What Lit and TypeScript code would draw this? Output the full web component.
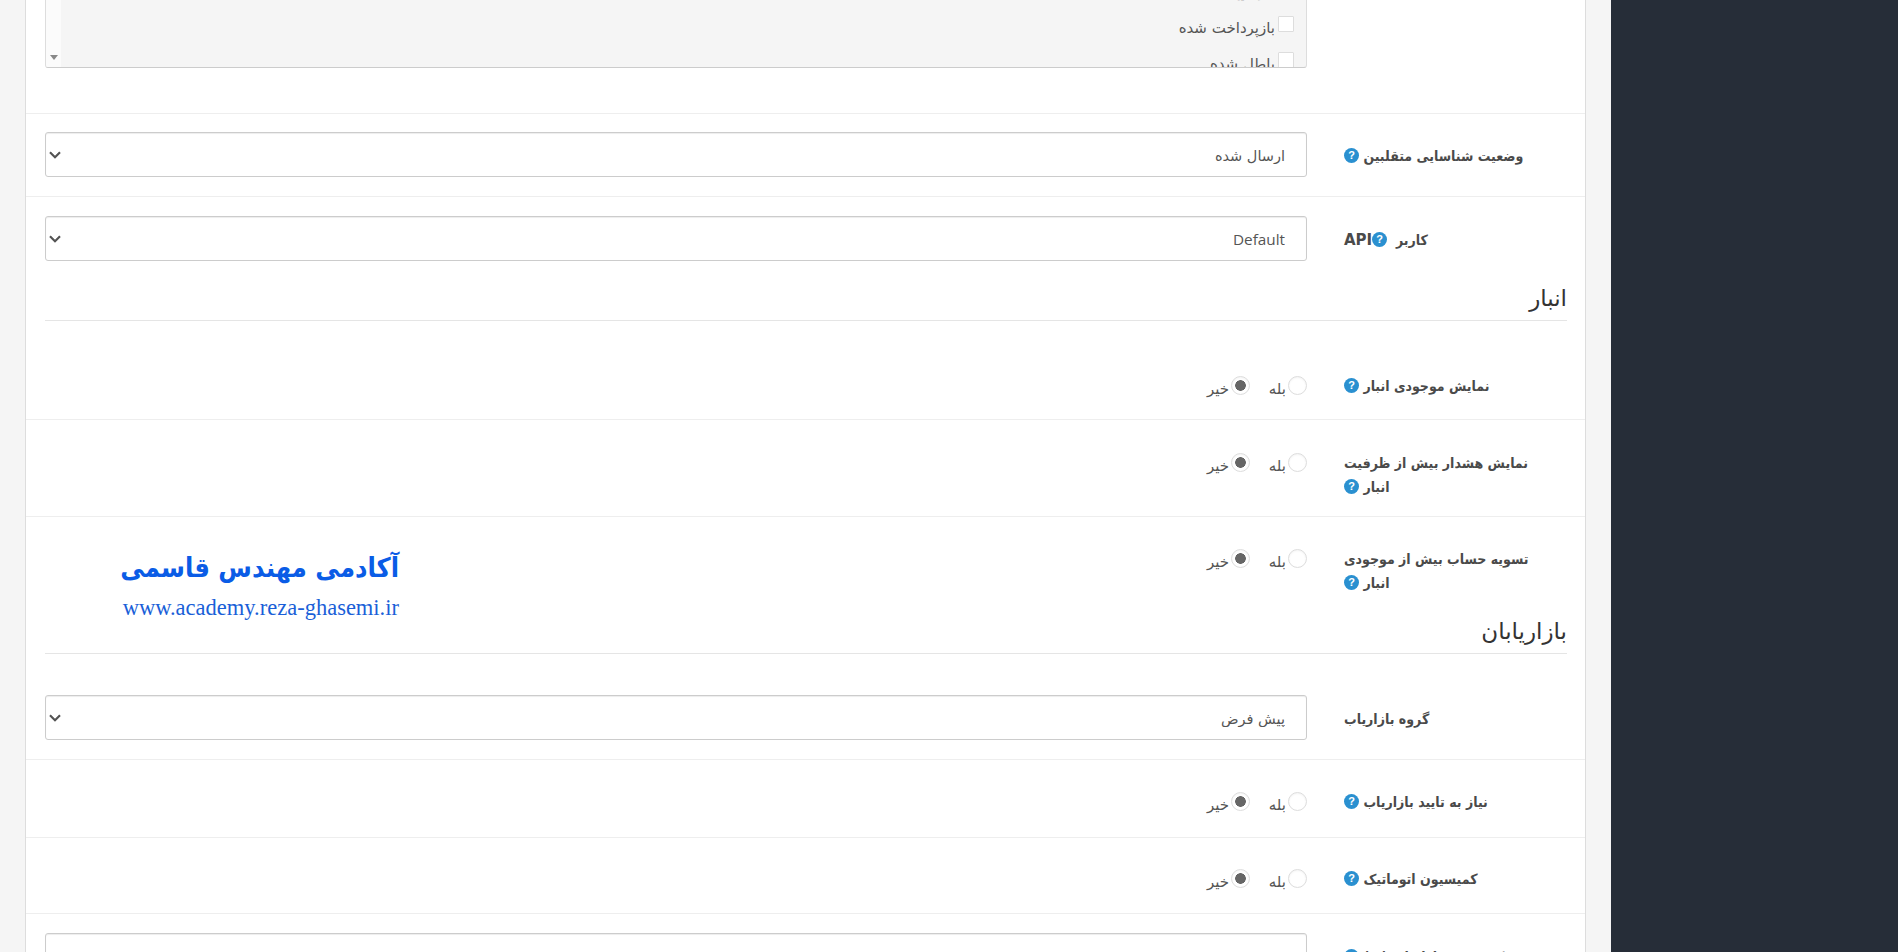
import { LitElement, html, css, nothing } from "lit";
import { customElement } from "lit/decorators.js";

type Field = {
  kind: "field";
  label: unknown;
  help: boolean;
  top: number;
  bottom: number;
  control: "radio" | "select" | "input";
  value?: string;
};
type Row = { kind: "head"; title: string } | Field;

const ROWS: Row[] = [
  { kind: "field", label: "وضعیت شناسایی متقلبین", help: true, top: 18, bottom: 19, control: "select", value: "ارسال شده" },
  { kind: "field", label: "API", help: true, top: 19, bottom: 18, control: "select", value: "Default" },
  { kind: "head", title: "انبار" },
  { kind: "field", label: "نمایش موجودی انبار", help: true, top: 53, bottom: 21, control: "radio" },
  { kind: "field", label: html`نمایش هشدار بیش از ظرفیت<br />انبار`, help: true, top: 31, bottom: 17, control: "radio" },
  { kind: "field", label: html`تسویه حساب بیش از موجودی<br />انبار`, help: true, top: 30, bottom: 17, control: "radio" },
  { kind: "head", title: "بازاریابان" },
  { kind: "field", label: "گروه بازاریاب", help: false, top: 41, bottom: 19, control: "select", value: "پیش فرض" },
  { kind: "field", label: "نیاز به تایید بازاریاب", help: true, top: 30, bottom: 23, control: "radio" },
  { kind: "field", label: "کمیسیون اتوماتیک", help: true, top: 29, bottom: 22, control: "radio" },
  { kind: "field", label: "کمیسیون بازاریاب (%)", help: true, top: 19, bottom: 19, control: "input", value: "5" },
];

@customElement("app-root")
export class AppRoot extends LitElement {
  static styles = css`
    :host {
      display: flex;
      height: 952px;
      overflow: hidden;
      background: #f5f5f5;
      font-family: "DejaVu Sans", "Noto Sans", sans-serif;
      color: #555;
      font-size: 13px;
    }
    .gutter { flex: 1; display: flex; padding: 0 25px; min-width: 0; }
    .side { width: 287px; flex: none; background: #262d38; }
    .card {
      position: relative;
      flex: 1;
      background: #fff;
      border-left: 1px solid #ddd;
      border-right: 1px solid #ddd;
      direction: rtl;
      height: 952px;
      overflow: hidden;
    }
    .row {
      display: grid;
      grid-template-columns: 223px 1262px;
      column-gap: 37px;
      padding-left: 19px;
      padding-right: 18px;
      border-bottom: 1px solid #eee;
    }
    .row.flat { border-bottom: 0; }
    .first { padding-top: 0; padding-bottom: 45px; }
    label.lab {
      display: block;
      text-align: left;
      font-family: "DejaVu Sans Condensed", "DejaVu Sans", sans-serif;
      font-weight: 700;
      font-size: 14px;
      line-height: 24px;
      color: #4a4a4a;
    }
    label.selectlab { margin-top: 12px; }
    .api { font-size: 15px; font-family: "DejaVu Sans", sans-serif; }
    .help {
      display: inline-block;
      width: 15px;
      height: 15px;
      border-radius: 50%;
      background: #2a90d0;
      color: #fff;
      font: 700 11px/15px "Liberation Sans", sans-serif;
      text-align: center;
      vertical-align: 2px;
    }
    .ctl {
      appearance: none;
      display: block;
      box-sizing: border-box;
      width: 100%;
      height: 45px;
      border: 1px solid #ccc;
      border-radius: 3px;
      background-color: #fff;
      box-shadow: inset 0 1px 1px rgba(0, 0, 0, 0.075);
      color: #555;
      padding: 3px 21px 0 12px;
      font: 14.5px "DejaVu Sans", sans-serif;
      direction: rtl;
      margin: 0;
    }
    select.ctl {
      background-image: url("data:image/svg+xml,%3Csvg xmlns='http://www.w3.org/2000/svg' width='12' height='8' viewBox='0 0 12 8'%3E%3Cpath d='M1 1.2 6 6.2 11 1.2' fill='none' stroke='%23555' stroke-width='2.2'/%3E%3C/svg%3E");
      background-repeat: no-repeat;
      background-position: left 3px center;
    }
    .ctl.en { font: 15.3px "Open Sans", sans-serif; padding-top: 0; }
    .radios {
      display: flex;
      height: 24px;
      padding-top: 2px;
      box-sizing: border-box;
      font-size: 15px;
      line-height: 26px;
    }
    .opt { display: flex; align-items: flex-start; gap: 2px; width: 57px; flex: none; }
    input[type="radio"] {
      appearance: none;
      flex: none;
      width: 19px;
      height: 19px;
      margin: 0;
      border: 1px solid #ddd;
      border-radius: 50%;
      background: #fff;
      box-shadow: inset 0 1px 2px rgba(0, 0, 0, 0.05);
    }
    input[type="radio"]:checked {
      background: radial-gradient(circle, #666 0 5px, #fff 5.6px);
    }
    .list {
      display: flex;
      height: 68px;
      box-sizing: border-box;
      border: 1px solid #ddd;
      border-top: 0;
      border-bottom-color: #ccc;
      border-radius: 0 0 3px 3px;
      background: #f5f5f5;
      overflow: hidden;
    }
    .items { flex: 1; margin-top: -20px; padding-right: 12px; }
    .item { display: flex; height: 36px; gap: 3px; font-size: 15px; line-height: 24px; }
    input[type="checkbox"] {
      appearance: none;
      flex: none;
      width: 16px;
      height: 16px;
      margin: 0;
      background: #fff;
      border: 1px solid #ddd;
      border-radius: 1px;
    }
    .bar {
      width: 15px;
      flex: none;
      background: #fbfbfb;
      display: flex;
      align-items: flex-end;
      justify-content: center;
      padding-bottom: 7px;
      box-sizing: border-box;
    }
    .bar i {
      width: 0;
      height: 0;
      border-left: 4.5px solid transparent;
      border-right: 4.5px solid transparent;
      border-top: 5px solid #888;
    }
    .head {
      margin: 0 18px 0 19px;
      height: 41px;
      border-bottom: 1px solid #e5e5e5;
      font-weight: 400;
      font-size: 23px;
      line-height: 38px;
      color: #333;
    }
    .mark {
      position: absolute;
      left: 95px;
      top: 545px;
      width: 278px;
      color: #0a5ce6;
      text-align: right;
    }
    .mark b {
      display: block;
      font: 600 27px/46px "DejaVu Sans Condensed", "DejaVu Sans", sans-serif;
      white-space: nowrap;
    }
    .mark u {
      display: block;
      direction: ltr;
      text-decoration: none;
      font: 22.5px/30px "Liberation Serif", serif;
      white-space: nowrap;
      color: #1a5fd8;
      margin-top: 2px;
      text-align: right;
    }
  `;

  private control(r: Field, i: number) {
    if (r.control === "radio") {
      return html`<div class="radios">
        <label class="opt"><input type="radio" name="r${i}" /><span>بله</span></label>
        <label class="opt"><input type="radio" name="r${i}" checked /><span>خیر</span></label>
      </div>`;
    }
    if (r.control === "input") {
      return html`<input class="ctl en" type="text" .value=${r.value ?? ""} />`;
    }
    const en = r.value === "Default";
    return html`<select class="ctl ${en ? "en" : ""}"><option>${r.value}</option></select>`;
  }

  private label(r: Field) {
    const help = r.help ? html`<span class="help">?</span>` : nothing;
    const cls = r.control === "radio" ? "lab" : "lab selectlab";
    if (r.label === "API") {
      return html`<label class=${cls}>کاربر&nbsp;&nbsp;<span class="help">?</span><span class="api">API</span></label>`;
    }
    return html`<label class=${cls}>${r.label} ${help}</label>`;
  }

  render() {
    return html`
      <div class="gutter">
        <main class="card">
          <div class="row first">
            <div></div>
            <div class="list">
              <div class="items">
                ${["مرجوع شده", "بازپرداخت شده", "باطل شده"].map(
                  (t) => html`<label class="item"><input type="checkbox" /><span>${t}</span></label>`
                )}
              </div>
              <div class="bar"><i></i></div>
            </div>
          </div>
          ${ROWS.map((r, i) =>
            r.kind === "head"
              ? html`<h3 class="head">${r.title}</h3>`
              : html`<div
                  class="row ${ROWS[i + 1]?.kind === "head" ? "flat" : ""}"
                  style="padding-top:${r.top}px;padding-bottom:${r.bottom}px"
                >
                  ${this.label(r)}
                  <div>${this.control(r, i)}</div>
                </div>`
          )}
          <div class="mark">
            <b>آکادمی مهندس قاسمی</b>
            <u>www.academy.reza-ghasemi.ir</u>
          </div>
        </main>
      </div>
      <aside class="side"></aside>
    `;
  }
}
